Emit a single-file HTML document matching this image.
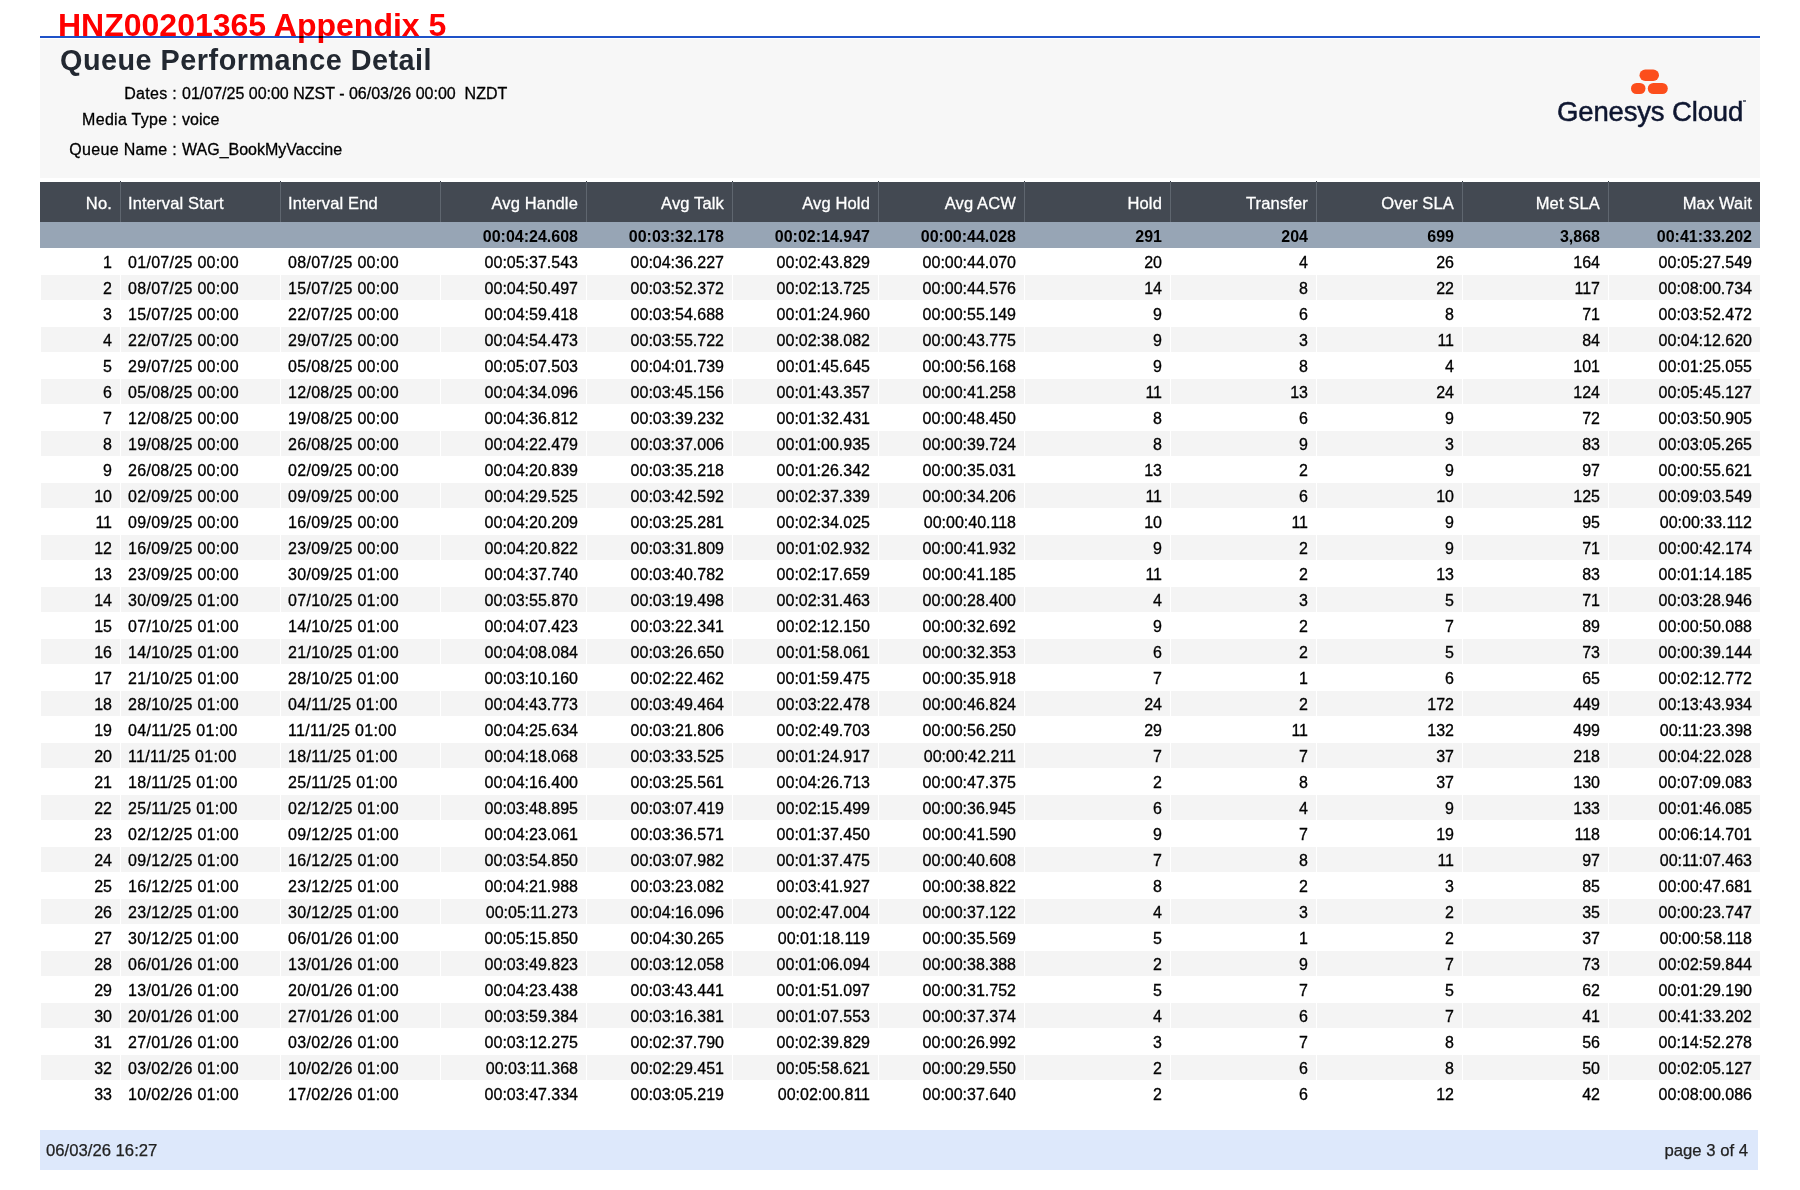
<!DOCTYPE html>
<html><head><meta charset="utf-8">
<style>
html,body{margin:0;padding:0;}
body{width:1800px;height:1190px;position:relative;overflow:hidden;background:#fff;font-family:"Liberation Sans",sans-serif;color:#000;}
.a{position:absolute;white-space:nowrap;}
#redtitle{left:58px;top:7px;font-size:32px;line-height:36px;font-weight:bold;color:#ff0000;mix-blend-mode:multiply;}
#blueline{position:absolute;left:40px;top:36px;width:1720px;height:2px;background:#1e52c8;}
#hdrbg{position:absolute;left:40px;top:39px;width:1720px;height:139px;background:#f7f7f7;}
#qpd{left:60px;top:43px;font-size:28.8px;line-height:34px;font-weight:bold;color:#222831;letter-spacing:0.5px;}
.meta{font-size:16px;line-height:20px;color:#000;-webkit-text-stroke:0.3px #000;}
.lbl{position:absolute;right:1623px;text-align:right;letter-spacing:0.3px;}
.val{position:absolute;left:182px;}
#logo{position:absolute;left:1550px;top:60px;width:200px;height:80px;}
#genesys{left:1557px;top:96px;font-size:27.5px;line-height:32px;color:#0e1630;letter-spacing:-0.15px;-webkit-text-stroke:0.5px #0e1630;}
#thead{position:absolute;left:40px;top:182px;width:1720px;height:40px;background:#434952;}
#tsum{position:absolute;left:40px;top:222px;width:1720px;height:26px;background:#97a5b5;}
.hsep{position:absolute;top:0;width:1px;height:40px;background:#5f666f;}
.hsep:before{content:"";position:absolute;left:0;top:-1px;width:1px;height:1px;background:#3a3f46;}
.c{position:absolute;top:0;white-space:nowrap;font-size:16px;}
.h{color:#fff;line-height:40px;font-size:16.5px;top:1px;letter-spacing:0.15px;-webkit-text-stroke:0.3px #fff;}
.s{font-weight:bold;line-height:26px;color:#000;top:2px;}
.row{position:absolute;left:40px;width:1720px;height:26px;}
.bg{position:absolute;top:1px;height:25px;background:#f4f4f4;}
.d{line-height:26px;color:#000;top:2px;-webkit-text-stroke:0.3px #000;}
.dt{letter-spacing:0.3px;}
#footer{position:absolute;left:40px;top:1130px;width:1718px;height:40px;background:#dde8fb;}
.ft{font-size:16.7px;line-height:40px;color:#222;position:absolute;top:1px;-webkit-text-stroke:0.25px #222;}
</style></head><body>
<div id="hdrbg"></div>
<div id="blueline"></div>
<div id="redtitle" class="a">HNZ00201365 Appendix 5</div>
<div id="qpd" class="a">Queue Performance Detail</div>
<div class="a meta" style="left:0;top:84px;width:1800px;height:20px"><span class="lbl">Dates :</span><span class="val">01/07/25 00:00 NZST - 06/03/26 00:00&nbsp; NZDT</span></div>
<div class="a meta" style="left:0;top:110px;width:1800px;height:20px"><span class="lbl">Media Type :</span><span class="val">voice</span></div>
<div class="a meta" style="left:0;top:140px;width:1800px;height:20px"><span class="lbl">Queue Name :</span><span class="val">WAG_BookMyVaccine</span></div>
<svg id="logo" width="200" height="80" viewBox="1550 60 200 80" style="position:absolute;left:1550px;top:60px">
<rect x="1639.5" y="69.5" width="19.5" height="11.5" rx="5.75" fill="#fc4e1c"/>
<rect x="1631" y="83" width="14.5" height="11" rx="5.5" fill="#fc4e1c"/>
<rect x="1647.8" y="83" width="20" height="11" rx="5.5" fill="#fc4e1c"/>
</svg>
<div id="genesys" class="a">Genesys Cloud</div>
<div style="position:absolute;left:1743px;top:100px;width:3px;height:2px;background:#0e1630;opacity:0.6"></div>
<div id="thead">
<div class="c h" style="left:0px;width:72px;text-align:right">No.</div>
<div class="c h" style="left:88px;width:152px">Interval Start</div>
<div class="c h" style="left:248px;width:152px">Interval End</div>
<div class="c h" style="left:400px;width:138px;text-align:right">Avg Handle</div>
<div class="c h" style="left:546px;width:138px;text-align:right">Avg Talk</div>
<div class="c h" style="left:692px;width:138px;text-align:right">Avg Hold</div>
<div class="c h" style="left:838px;width:138px;text-align:right">Avg ACW</div>
<div class="c h" style="left:984px;width:138px;text-align:right">Hold</div>
<div class="c h" style="left:1130px;width:138px;text-align:right">Transfer</div>
<div class="c h" style="left:1276px;width:138px;text-align:right">Over SLA</div>
<div class="c h" style="left:1422px;width:138px;text-align:right">Met SLA</div>
<div class="c h" style="left:1568px;width:144px;text-align:right">Max Wait</div>
<div class="hsep" style="left:80px"></div>
<div class="hsep" style="left:240px"></div>
<div class="hsep" style="left:400px"></div>
<div class="hsep" style="left:546px"></div>
<div class="hsep" style="left:692px"></div>
<div class="hsep" style="left:838px"></div>
<div class="hsep" style="left:984px"></div>
<div class="hsep" style="left:1130px"></div>
<div class="hsep" style="left:1276px"></div>
<div class="hsep" style="left:1422px"></div>
<div class="hsep" style="left:1568px"></div>
</div>
<div id="tsum">
<div class="c s" style="left:400px;width:138px;text-align:right">00:04:24.608</div>
<div class="c s" style="left:546px;width:138px;text-align:right">00:03:32.178</div>
<div class="c s" style="left:692px;width:138px;text-align:right">00:02:14.947</div>
<div class="c s" style="left:838px;width:138px;text-align:right">00:00:44.028</div>
<div class="c s" style="left:984px;width:138px;text-align:right">291</div>
<div class="c s" style="left:1130px;width:138px;text-align:right">204</div>
<div class="c s" style="left:1276px;width:138px;text-align:right">699</div>
<div class="c s" style="left:1422px;width:138px;text-align:right">3,868</div>
<div class="c s" style="left:1568px;width:144px;text-align:right">00:41:33.202</div>
</div>
<div class="row" style="top:248px">
<div class="c d" style="left:0px;width:72px;text-align:right">1</div>
<div class="c d dt" style="left:88px;width:152px">01/07/25 00:00</div>
<div class="c d dt" style="left:248px;width:152px">08/07/25 00:00</div>
<div class="c d" style="left:400px;width:138px;text-align:right">00:05:37.543</div>
<div class="c d" style="left:546px;width:138px;text-align:right">00:04:36.227</div>
<div class="c d" style="left:692px;width:138px;text-align:right">00:02:43.829</div>
<div class="c d" style="left:838px;width:138px;text-align:right">00:00:44.070</div>
<div class="c d" style="left:984px;width:138px;text-align:right">20</div>
<div class="c d" style="left:1130px;width:138px;text-align:right">4</div>
<div class="c d" style="left:1276px;width:138px;text-align:right">26</div>
<div class="c d" style="left:1422px;width:138px;text-align:right">164</div>
<div class="c d" style="left:1568px;width:144px;text-align:right">00:05:27.549</div>
</div>
<div class="row" style="top:274px">
<div class="bg" style="left:1px;width:79px"></div>
<div class="bg" style="left:81px;width:159px"></div>
<div class="bg" style="left:241px;width:159px"></div>
<div class="bg" style="left:401px;width:145px"></div>
<div class="bg" style="left:547px;width:145px"></div>
<div class="bg" style="left:693px;width:145px"></div>
<div class="bg" style="left:839px;width:145px"></div>
<div class="bg" style="left:985px;width:145px"></div>
<div class="bg" style="left:1131px;width:145px"></div>
<div class="bg" style="left:1277px;width:145px"></div>
<div class="bg" style="left:1423px;width:145px"></div>
<div class="bg" style="left:1569px;width:151px"></div>
<div class="c d" style="left:0px;width:72px;text-align:right">2</div>
<div class="c d dt" style="left:88px;width:152px">08/07/25 00:00</div>
<div class="c d dt" style="left:248px;width:152px">15/07/25 00:00</div>
<div class="c d" style="left:400px;width:138px;text-align:right">00:04:50.497</div>
<div class="c d" style="left:546px;width:138px;text-align:right">00:03:52.372</div>
<div class="c d" style="left:692px;width:138px;text-align:right">00:02:13.725</div>
<div class="c d" style="left:838px;width:138px;text-align:right">00:00:44.576</div>
<div class="c d" style="left:984px;width:138px;text-align:right">14</div>
<div class="c d" style="left:1130px;width:138px;text-align:right">8</div>
<div class="c d" style="left:1276px;width:138px;text-align:right">22</div>
<div class="c d" style="left:1422px;width:138px;text-align:right">117</div>
<div class="c d" style="left:1568px;width:144px;text-align:right">00:08:00.734</div>
</div>
<div class="row" style="top:300px">
<div class="c d" style="left:0px;width:72px;text-align:right">3</div>
<div class="c d dt" style="left:88px;width:152px">15/07/25 00:00</div>
<div class="c d dt" style="left:248px;width:152px">22/07/25 00:00</div>
<div class="c d" style="left:400px;width:138px;text-align:right">00:04:59.418</div>
<div class="c d" style="left:546px;width:138px;text-align:right">00:03:54.688</div>
<div class="c d" style="left:692px;width:138px;text-align:right">00:01:24.960</div>
<div class="c d" style="left:838px;width:138px;text-align:right">00:00:55.149</div>
<div class="c d" style="left:984px;width:138px;text-align:right">9</div>
<div class="c d" style="left:1130px;width:138px;text-align:right">6</div>
<div class="c d" style="left:1276px;width:138px;text-align:right">8</div>
<div class="c d" style="left:1422px;width:138px;text-align:right">71</div>
<div class="c d" style="left:1568px;width:144px;text-align:right">00:03:52.472</div>
</div>
<div class="row" style="top:326px">
<div class="bg" style="left:1px;width:79px"></div>
<div class="bg" style="left:81px;width:159px"></div>
<div class="bg" style="left:241px;width:159px"></div>
<div class="bg" style="left:401px;width:145px"></div>
<div class="bg" style="left:547px;width:145px"></div>
<div class="bg" style="left:693px;width:145px"></div>
<div class="bg" style="left:839px;width:145px"></div>
<div class="bg" style="left:985px;width:145px"></div>
<div class="bg" style="left:1131px;width:145px"></div>
<div class="bg" style="left:1277px;width:145px"></div>
<div class="bg" style="left:1423px;width:145px"></div>
<div class="bg" style="left:1569px;width:151px"></div>
<div class="c d" style="left:0px;width:72px;text-align:right">4</div>
<div class="c d dt" style="left:88px;width:152px">22/07/25 00:00</div>
<div class="c d dt" style="left:248px;width:152px">29/07/25 00:00</div>
<div class="c d" style="left:400px;width:138px;text-align:right">00:04:54.473</div>
<div class="c d" style="left:546px;width:138px;text-align:right">00:03:55.722</div>
<div class="c d" style="left:692px;width:138px;text-align:right">00:02:38.082</div>
<div class="c d" style="left:838px;width:138px;text-align:right">00:00:43.775</div>
<div class="c d" style="left:984px;width:138px;text-align:right">9</div>
<div class="c d" style="left:1130px;width:138px;text-align:right">3</div>
<div class="c d" style="left:1276px;width:138px;text-align:right">11</div>
<div class="c d" style="left:1422px;width:138px;text-align:right">84</div>
<div class="c d" style="left:1568px;width:144px;text-align:right">00:04:12.620</div>
</div>
<div class="row" style="top:352px">
<div class="c d" style="left:0px;width:72px;text-align:right">5</div>
<div class="c d dt" style="left:88px;width:152px">29/07/25 00:00</div>
<div class="c d dt" style="left:248px;width:152px">05/08/25 00:00</div>
<div class="c d" style="left:400px;width:138px;text-align:right">00:05:07.503</div>
<div class="c d" style="left:546px;width:138px;text-align:right">00:04:01.739</div>
<div class="c d" style="left:692px;width:138px;text-align:right">00:01:45.645</div>
<div class="c d" style="left:838px;width:138px;text-align:right">00:00:56.168</div>
<div class="c d" style="left:984px;width:138px;text-align:right">9</div>
<div class="c d" style="left:1130px;width:138px;text-align:right">8</div>
<div class="c d" style="left:1276px;width:138px;text-align:right">4</div>
<div class="c d" style="left:1422px;width:138px;text-align:right">101</div>
<div class="c d" style="left:1568px;width:144px;text-align:right">00:01:25.055</div>
</div>
<div class="row" style="top:378px">
<div class="bg" style="left:1px;width:79px"></div>
<div class="bg" style="left:81px;width:159px"></div>
<div class="bg" style="left:241px;width:159px"></div>
<div class="bg" style="left:401px;width:145px"></div>
<div class="bg" style="left:547px;width:145px"></div>
<div class="bg" style="left:693px;width:145px"></div>
<div class="bg" style="left:839px;width:145px"></div>
<div class="bg" style="left:985px;width:145px"></div>
<div class="bg" style="left:1131px;width:145px"></div>
<div class="bg" style="left:1277px;width:145px"></div>
<div class="bg" style="left:1423px;width:145px"></div>
<div class="bg" style="left:1569px;width:151px"></div>
<div class="c d" style="left:0px;width:72px;text-align:right">6</div>
<div class="c d dt" style="left:88px;width:152px">05/08/25 00:00</div>
<div class="c d dt" style="left:248px;width:152px">12/08/25 00:00</div>
<div class="c d" style="left:400px;width:138px;text-align:right">00:04:34.096</div>
<div class="c d" style="left:546px;width:138px;text-align:right">00:03:45.156</div>
<div class="c d" style="left:692px;width:138px;text-align:right">00:01:43.357</div>
<div class="c d" style="left:838px;width:138px;text-align:right">00:00:41.258</div>
<div class="c d" style="left:984px;width:138px;text-align:right">11</div>
<div class="c d" style="left:1130px;width:138px;text-align:right">13</div>
<div class="c d" style="left:1276px;width:138px;text-align:right">24</div>
<div class="c d" style="left:1422px;width:138px;text-align:right">124</div>
<div class="c d" style="left:1568px;width:144px;text-align:right">00:05:45.127</div>
</div>
<div class="row" style="top:404px">
<div class="c d" style="left:0px;width:72px;text-align:right">7</div>
<div class="c d dt" style="left:88px;width:152px">12/08/25 00:00</div>
<div class="c d dt" style="left:248px;width:152px">19/08/25 00:00</div>
<div class="c d" style="left:400px;width:138px;text-align:right">00:04:36.812</div>
<div class="c d" style="left:546px;width:138px;text-align:right">00:03:39.232</div>
<div class="c d" style="left:692px;width:138px;text-align:right">00:01:32.431</div>
<div class="c d" style="left:838px;width:138px;text-align:right">00:00:48.450</div>
<div class="c d" style="left:984px;width:138px;text-align:right">8</div>
<div class="c d" style="left:1130px;width:138px;text-align:right">6</div>
<div class="c d" style="left:1276px;width:138px;text-align:right">9</div>
<div class="c d" style="left:1422px;width:138px;text-align:right">72</div>
<div class="c d" style="left:1568px;width:144px;text-align:right">00:03:50.905</div>
</div>
<div class="row" style="top:430px">
<div class="bg" style="left:1px;width:79px"></div>
<div class="bg" style="left:81px;width:159px"></div>
<div class="bg" style="left:241px;width:159px"></div>
<div class="bg" style="left:401px;width:145px"></div>
<div class="bg" style="left:547px;width:145px"></div>
<div class="bg" style="left:693px;width:145px"></div>
<div class="bg" style="left:839px;width:145px"></div>
<div class="bg" style="left:985px;width:145px"></div>
<div class="bg" style="left:1131px;width:145px"></div>
<div class="bg" style="left:1277px;width:145px"></div>
<div class="bg" style="left:1423px;width:145px"></div>
<div class="bg" style="left:1569px;width:151px"></div>
<div class="c d" style="left:0px;width:72px;text-align:right">8</div>
<div class="c d dt" style="left:88px;width:152px">19/08/25 00:00</div>
<div class="c d dt" style="left:248px;width:152px">26/08/25 00:00</div>
<div class="c d" style="left:400px;width:138px;text-align:right">00:04:22.479</div>
<div class="c d" style="left:546px;width:138px;text-align:right">00:03:37.006</div>
<div class="c d" style="left:692px;width:138px;text-align:right">00:01:00.935</div>
<div class="c d" style="left:838px;width:138px;text-align:right">00:00:39.724</div>
<div class="c d" style="left:984px;width:138px;text-align:right">8</div>
<div class="c d" style="left:1130px;width:138px;text-align:right">9</div>
<div class="c d" style="left:1276px;width:138px;text-align:right">3</div>
<div class="c d" style="left:1422px;width:138px;text-align:right">83</div>
<div class="c d" style="left:1568px;width:144px;text-align:right">00:03:05.265</div>
</div>
<div class="row" style="top:456px">
<div class="c d" style="left:0px;width:72px;text-align:right">9</div>
<div class="c d dt" style="left:88px;width:152px">26/08/25 00:00</div>
<div class="c d dt" style="left:248px;width:152px">02/09/25 00:00</div>
<div class="c d" style="left:400px;width:138px;text-align:right">00:04:20.839</div>
<div class="c d" style="left:546px;width:138px;text-align:right">00:03:35.218</div>
<div class="c d" style="left:692px;width:138px;text-align:right">00:01:26.342</div>
<div class="c d" style="left:838px;width:138px;text-align:right">00:00:35.031</div>
<div class="c d" style="left:984px;width:138px;text-align:right">13</div>
<div class="c d" style="left:1130px;width:138px;text-align:right">2</div>
<div class="c d" style="left:1276px;width:138px;text-align:right">9</div>
<div class="c d" style="left:1422px;width:138px;text-align:right">97</div>
<div class="c d" style="left:1568px;width:144px;text-align:right">00:00:55.621</div>
</div>
<div class="row" style="top:482px">
<div class="bg" style="left:1px;width:79px"></div>
<div class="bg" style="left:81px;width:159px"></div>
<div class="bg" style="left:241px;width:159px"></div>
<div class="bg" style="left:401px;width:145px"></div>
<div class="bg" style="left:547px;width:145px"></div>
<div class="bg" style="left:693px;width:145px"></div>
<div class="bg" style="left:839px;width:145px"></div>
<div class="bg" style="left:985px;width:145px"></div>
<div class="bg" style="left:1131px;width:145px"></div>
<div class="bg" style="left:1277px;width:145px"></div>
<div class="bg" style="left:1423px;width:145px"></div>
<div class="bg" style="left:1569px;width:151px"></div>
<div class="c d" style="left:0px;width:72px;text-align:right">10</div>
<div class="c d dt" style="left:88px;width:152px">02/09/25 00:00</div>
<div class="c d dt" style="left:248px;width:152px">09/09/25 00:00</div>
<div class="c d" style="left:400px;width:138px;text-align:right">00:04:29.525</div>
<div class="c d" style="left:546px;width:138px;text-align:right">00:03:42.592</div>
<div class="c d" style="left:692px;width:138px;text-align:right">00:02:37.339</div>
<div class="c d" style="left:838px;width:138px;text-align:right">00:00:34.206</div>
<div class="c d" style="left:984px;width:138px;text-align:right">11</div>
<div class="c d" style="left:1130px;width:138px;text-align:right">6</div>
<div class="c d" style="left:1276px;width:138px;text-align:right">10</div>
<div class="c d" style="left:1422px;width:138px;text-align:right">125</div>
<div class="c d" style="left:1568px;width:144px;text-align:right">00:09:03.549</div>
</div>
<div class="row" style="top:508px">
<div class="c d" style="left:0px;width:72px;text-align:right">11</div>
<div class="c d dt" style="left:88px;width:152px">09/09/25 00:00</div>
<div class="c d dt" style="left:248px;width:152px">16/09/25 00:00</div>
<div class="c d" style="left:400px;width:138px;text-align:right">00:04:20.209</div>
<div class="c d" style="left:546px;width:138px;text-align:right">00:03:25.281</div>
<div class="c d" style="left:692px;width:138px;text-align:right">00:02:34.025</div>
<div class="c d" style="left:838px;width:138px;text-align:right">00:00:40.118</div>
<div class="c d" style="left:984px;width:138px;text-align:right">10</div>
<div class="c d" style="left:1130px;width:138px;text-align:right">11</div>
<div class="c d" style="left:1276px;width:138px;text-align:right">9</div>
<div class="c d" style="left:1422px;width:138px;text-align:right">95</div>
<div class="c d" style="left:1568px;width:144px;text-align:right">00:00:33.112</div>
</div>
<div class="row" style="top:534px">
<div class="bg" style="left:1px;width:79px"></div>
<div class="bg" style="left:81px;width:159px"></div>
<div class="bg" style="left:241px;width:159px"></div>
<div class="bg" style="left:401px;width:145px"></div>
<div class="bg" style="left:547px;width:145px"></div>
<div class="bg" style="left:693px;width:145px"></div>
<div class="bg" style="left:839px;width:145px"></div>
<div class="bg" style="left:985px;width:145px"></div>
<div class="bg" style="left:1131px;width:145px"></div>
<div class="bg" style="left:1277px;width:145px"></div>
<div class="bg" style="left:1423px;width:145px"></div>
<div class="bg" style="left:1569px;width:151px"></div>
<div class="c d" style="left:0px;width:72px;text-align:right">12</div>
<div class="c d dt" style="left:88px;width:152px">16/09/25 00:00</div>
<div class="c d dt" style="left:248px;width:152px">23/09/25 00:00</div>
<div class="c d" style="left:400px;width:138px;text-align:right">00:04:20.822</div>
<div class="c d" style="left:546px;width:138px;text-align:right">00:03:31.809</div>
<div class="c d" style="left:692px;width:138px;text-align:right">00:01:02.932</div>
<div class="c d" style="left:838px;width:138px;text-align:right">00:00:41.932</div>
<div class="c d" style="left:984px;width:138px;text-align:right">9</div>
<div class="c d" style="left:1130px;width:138px;text-align:right">2</div>
<div class="c d" style="left:1276px;width:138px;text-align:right">9</div>
<div class="c d" style="left:1422px;width:138px;text-align:right">71</div>
<div class="c d" style="left:1568px;width:144px;text-align:right">00:00:42.174</div>
</div>
<div class="row" style="top:560px">
<div class="c d" style="left:0px;width:72px;text-align:right">13</div>
<div class="c d dt" style="left:88px;width:152px">23/09/25 00:00</div>
<div class="c d dt" style="left:248px;width:152px">30/09/25 01:00</div>
<div class="c d" style="left:400px;width:138px;text-align:right">00:04:37.740</div>
<div class="c d" style="left:546px;width:138px;text-align:right">00:03:40.782</div>
<div class="c d" style="left:692px;width:138px;text-align:right">00:02:17.659</div>
<div class="c d" style="left:838px;width:138px;text-align:right">00:00:41.185</div>
<div class="c d" style="left:984px;width:138px;text-align:right">11</div>
<div class="c d" style="left:1130px;width:138px;text-align:right">2</div>
<div class="c d" style="left:1276px;width:138px;text-align:right">13</div>
<div class="c d" style="left:1422px;width:138px;text-align:right">83</div>
<div class="c d" style="left:1568px;width:144px;text-align:right">00:01:14.185</div>
</div>
<div class="row" style="top:586px">
<div class="bg" style="left:1px;width:79px"></div>
<div class="bg" style="left:81px;width:159px"></div>
<div class="bg" style="left:241px;width:159px"></div>
<div class="bg" style="left:401px;width:145px"></div>
<div class="bg" style="left:547px;width:145px"></div>
<div class="bg" style="left:693px;width:145px"></div>
<div class="bg" style="left:839px;width:145px"></div>
<div class="bg" style="left:985px;width:145px"></div>
<div class="bg" style="left:1131px;width:145px"></div>
<div class="bg" style="left:1277px;width:145px"></div>
<div class="bg" style="left:1423px;width:145px"></div>
<div class="bg" style="left:1569px;width:151px"></div>
<div class="c d" style="left:0px;width:72px;text-align:right">14</div>
<div class="c d dt" style="left:88px;width:152px">30/09/25 01:00</div>
<div class="c d dt" style="left:248px;width:152px">07/10/25 01:00</div>
<div class="c d" style="left:400px;width:138px;text-align:right">00:03:55.870</div>
<div class="c d" style="left:546px;width:138px;text-align:right">00:03:19.498</div>
<div class="c d" style="left:692px;width:138px;text-align:right">00:02:31.463</div>
<div class="c d" style="left:838px;width:138px;text-align:right">00:00:28.400</div>
<div class="c d" style="left:984px;width:138px;text-align:right">4</div>
<div class="c d" style="left:1130px;width:138px;text-align:right">3</div>
<div class="c d" style="left:1276px;width:138px;text-align:right">5</div>
<div class="c d" style="left:1422px;width:138px;text-align:right">71</div>
<div class="c d" style="left:1568px;width:144px;text-align:right">00:03:28.946</div>
</div>
<div class="row" style="top:612px">
<div class="c d" style="left:0px;width:72px;text-align:right">15</div>
<div class="c d dt" style="left:88px;width:152px">07/10/25 01:00</div>
<div class="c d dt" style="left:248px;width:152px">14/10/25 01:00</div>
<div class="c d" style="left:400px;width:138px;text-align:right">00:04:07.423</div>
<div class="c d" style="left:546px;width:138px;text-align:right">00:03:22.341</div>
<div class="c d" style="left:692px;width:138px;text-align:right">00:02:12.150</div>
<div class="c d" style="left:838px;width:138px;text-align:right">00:00:32.692</div>
<div class="c d" style="left:984px;width:138px;text-align:right">9</div>
<div class="c d" style="left:1130px;width:138px;text-align:right">2</div>
<div class="c d" style="left:1276px;width:138px;text-align:right">7</div>
<div class="c d" style="left:1422px;width:138px;text-align:right">89</div>
<div class="c d" style="left:1568px;width:144px;text-align:right">00:00:50.088</div>
</div>
<div class="row" style="top:638px">
<div class="bg" style="left:1px;width:79px"></div>
<div class="bg" style="left:81px;width:159px"></div>
<div class="bg" style="left:241px;width:159px"></div>
<div class="bg" style="left:401px;width:145px"></div>
<div class="bg" style="left:547px;width:145px"></div>
<div class="bg" style="left:693px;width:145px"></div>
<div class="bg" style="left:839px;width:145px"></div>
<div class="bg" style="left:985px;width:145px"></div>
<div class="bg" style="left:1131px;width:145px"></div>
<div class="bg" style="left:1277px;width:145px"></div>
<div class="bg" style="left:1423px;width:145px"></div>
<div class="bg" style="left:1569px;width:151px"></div>
<div class="c d" style="left:0px;width:72px;text-align:right">16</div>
<div class="c d dt" style="left:88px;width:152px">14/10/25 01:00</div>
<div class="c d dt" style="left:248px;width:152px">21/10/25 01:00</div>
<div class="c d" style="left:400px;width:138px;text-align:right">00:04:08.084</div>
<div class="c d" style="left:546px;width:138px;text-align:right">00:03:26.650</div>
<div class="c d" style="left:692px;width:138px;text-align:right">00:01:58.061</div>
<div class="c d" style="left:838px;width:138px;text-align:right">00:00:32.353</div>
<div class="c d" style="left:984px;width:138px;text-align:right">6</div>
<div class="c d" style="left:1130px;width:138px;text-align:right">2</div>
<div class="c d" style="left:1276px;width:138px;text-align:right">5</div>
<div class="c d" style="left:1422px;width:138px;text-align:right">73</div>
<div class="c d" style="left:1568px;width:144px;text-align:right">00:00:39.144</div>
</div>
<div class="row" style="top:664px">
<div class="c d" style="left:0px;width:72px;text-align:right">17</div>
<div class="c d dt" style="left:88px;width:152px">21/10/25 01:00</div>
<div class="c d dt" style="left:248px;width:152px">28/10/25 01:00</div>
<div class="c d" style="left:400px;width:138px;text-align:right">00:03:10.160</div>
<div class="c d" style="left:546px;width:138px;text-align:right">00:02:22.462</div>
<div class="c d" style="left:692px;width:138px;text-align:right">00:01:59.475</div>
<div class="c d" style="left:838px;width:138px;text-align:right">00:00:35.918</div>
<div class="c d" style="left:984px;width:138px;text-align:right">7</div>
<div class="c d" style="left:1130px;width:138px;text-align:right">1</div>
<div class="c d" style="left:1276px;width:138px;text-align:right">6</div>
<div class="c d" style="left:1422px;width:138px;text-align:right">65</div>
<div class="c d" style="left:1568px;width:144px;text-align:right">00:02:12.772</div>
</div>
<div class="row" style="top:690px">
<div class="bg" style="left:1px;width:79px"></div>
<div class="bg" style="left:81px;width:159px"></div>
<div class="bg" style="left:241px;width:159px"></div>
<div class="bg" style="left:401px;width:145px"></div>
<div class="bg" style="left:547px;width:145px"></div>
<div class="bg" style="left:693px;width:145px"></div>
<div class="bg" style="left:839px;width:145px"></div>
<div class="bg" style="left:985px;width:145px"></div>
<div class="bg" style="left:1131px;width:145px"></div>
<div class="bg" style="left:1277px;width:145px"></div>
<div class="bg" style="left:1423px;width:145px"></div>
<div class="bg" style="left:1569px;width:151px"></div>
<div class="c d" style="left:0px;width:72px;text-align:right">18</div>
<div class="c d dt" style="left:88px;width:152px">28/10/25 01:00</div>
<div class="c d dt" style="left:248px;width:152px">04/11/25 01:00</div>
<div class="c d" style="left:400px;width:138px;text-align:right">00:04:43.773</div>
<div class="c d" style="left:546px;width:138px;text-align:right">00:03:49.464</div>
<div class="c d" style="left:692px;width:138px;text-align:right">00:03:22.478</div>
<div class="c d" style="left:838px;width:138px;text-align:right">00:00:46.824</div>
<div class="c d" style="left:984px;width:138px;text-align:right">24</div>
<div class="c d" style="left:1130px;width:138px;text-align:right">2</div>
<div class="c d" style="left:1276px;width:138px;text-align:right">172</div>
<div class="c d" style="left:1422px;width:138px;text-align:right">449</div>
<div class="c d" style="left:1568px;width:144px;text-align:right">00:13:43.934</div>
</div>
<div class="row" style="top:716px">
<div class="c d" style="left:0px;width:72px;text-align:right">19</div>
<div class="c d dt" style="left:88px;width:152px">04/11/25 01:00</div>
<div class="c d dt" style="left:248px;width:152px">11/11/25 01:00</div>
<div class="c d" style="left:400px;width:138px;text-align:right">00:04:25.634</div>
<div class="c d" style="left:546px;width:138px;text-align:right">00:03:21.806</div>
<div class="c d" style="left:692px;width:138px;text-align:right">00:02:49.703</div>
<div class="c d" style="left:838px;width:138px;text-align:right">00:00:56.250</div>
<div class="c d" style="left:984px;width:138px;text-align:right">29</div>
<div class="c d" style="left:1130px;width:138px;text-align:right">11</div>
<div class="c d" style="left:1276px;width:138px;text-align:right">132</div>
<div class="c d" style="left:1422px;width:138px;text-align:right">499</div>
<div class="c d" style="left:1568px;width:144px;text-align:right">00:11:23.398</div>
</div>
<div class="row" style="top:742px">
<div class="bg" style="left:1px;width:79px"></div>
<div class="bg" style="left:81px;width:159px"></div>
<div class="bg" style="left:241px;width:159px"></div>
<div class="bg" style="left:401px;width:145px"></div>
<div class="bg" style="left:547px;width:145px"></div>
<div class="bg" style="left:693px;width:145px"></div>
<div class="bg" style="left:839px;width:145px"></div>
<div class="bg" style="left:985px;width:145px"></div>
<div class="bg" style="left:1131px;width:145px"></div>
<div class="bg" style="left:1277px;width:145px"></div>
<div class="bg" style="left:1423px;width:145px"></div>
<div class="bg" style="left:1569px;width:151px"></div>
<div class="c d" style="left:0px;width:72px;text-align:right">20</div>
<div class="c d dt" style="left:88px;width:152px">11/11/25 01:00</div>
<div class="c d dt" style="left:248px;width:152px">18/11/25 01:00</div>
<div class="c d" style="left:400px;width:138px;text-align:right">00:04:18.068</div>
<div class="c d" style="left:546px;width:138px;text-align:right">00:03:33.525</div>
<div class="c d" style="left:692px;width:138px;text-align:right">00:01:24.917</div>
<div class="c d" style="left:838px;width:138px;text-align:right">00:00:42.211</div>
<div class="c d" style="left:984px;width:138px;text-align:right">7</div>
<div class="c d" style="left:1130px;width:138px;text-align:right">7</div>
<div class="c d" style="left:1276px;width:138px;text-align:right">37</div>
<div class="c d" style="left:1422px;width:138px;text-align:right">218</div>
<div class="c d" style="left:1568px;width:144px;text-align:right">00:04:22.028</div>
</div>
<div class="row" style="top:768px">
<div class="c d" style="left:0px;width:72px;text-align:right">21</div>
<div class="c d dt" style="left:88px;width:152px">18/11/25 01:00</div>
<div class="c d dt" style="left:248px;width:152px">25/11/25 01:00</div>
<div class="c d" style="left:400px;width:138px;text-align:right">00:04:16.400</div>
<div class="c d" style="left:546px;width:138px;text-align:right">00:03:25.561</div>
<div class="c d" style="left:692px;width:138px;text-align:right">00:04:26.713</div>
<div class="c d" style="left:838px;width:138px;text-align:right">00:00:47.375</div>
<div class="c d" style="left:984px;width:138px;text-align:right">2</div>
<div class="c d" style="left:1130px;width:138px;text-align:right">8</div>
<div class="c d" style="left:1276px;width:138px;text-align:right">37</div>
<div class="c d" style="left:1422px;width:138px;text-align:right">130</div>
<div class="c d" style="left:1568px;width:144px;text-align:right">00:07:09.083</div>
</div>
<div class="row" style="top:794px">
<div class="bg" style="left:1px;width:79px"></div>
<div class="bg" style="left:81px;width:159px"></div>
<div class="bg" style="left:241px;width:159px"></div>
<div class="bg" style="left:401px;width:145px"></div>
<div class="bg" style="left:547px;width:145px"></div>
<div class="bg" style="left:693px;width:145px"></div>
<div class="bg" style="left:839px;width:145px"></div>
<div class="bg" style="left:985px;width:145px"></div>
<div class="bg" style="left:1131px;width:145px"></div>
<div class="bg" style="left:1277px;width:145px"></div>
<div class="bg" style="left:1423px;width:145px"></div>
<div class="bg" style="left:1569px;width:151px"></div>
<div class="c d" style="left:0px;width:72px;text-align:right">22</div>
<div class="c d dt" style="left:88px;width:152px">25/11/25 01:00</div>
<div class="c d dt" style="left:248px;width:152px">02/12/25 01:00</div>
<div class="c d" style="left:400px;width:138px;text-align:right">00:03:48.895</div>
<div class="c d" style="left:546px;width:138px;text-align:right">00:03:07.419</div>
<div class="c d" style="left:692px;width:138px;text-align:right">00:02:15.499</div>
<div class="c d" style="left:838px;width:138px;text-align:right">00:00:36.945</div>
<div class="c d" style="left:984px;width:138px;text-align:right">6</div>
<div class="c d" style="left:1130px;width:138px;text-align:right">4</div>
<div class="c d" style="left:1276px;width:138px;text-align:right">9</div>
<div class="c d" style="left:1422px;width:138px;text-align:right">133</div>
<div class="c d" style="left:1568px;width:144px;text-align:right">00:01:46.085</div>
</div>
<div class="row" style="top:820px">
<div class="c d" style="left:0px;width:72px;text-align:right">23</div>
<div class="c d dt" style="left:88px;width:152px">02/12/25 01:00</div>
<div class="c d dt" style="left:248px;width:152px">09/12/25 01:00</div>
<div class="c d" style="left:400px;width:138px;text-align:right">00:04:23.061</div>
<div class="c d" style="left:546px;width:138px;text-align:right">00:03:36.571</div>
<div class="c d" style="left:692px;width:138px;text-align:right">00:01:37.450</div>
<div class="c d" style="left:838px;width:138px;text-align:right">00:00:41.590</div>
<div class="c d" style="left:984px;width:138px;text-align:right">9</div>
<div class="c d" style="left:1130px;width:138px;text-align:right">7</div>
<div class="c d" style="left:1276px;width:138px;text-align:right">19</div>
<div class="c d" style="left:1422px;width:138px;text-align:right">118</div>
<div class="c d" style="left:1568px;width:144px;text-align:right">00:06:14.701</div>
</div>
<div class="row" style="top:846px">
<div class="bg" style="left:1px;width:79px"></div>
<div class="bg" style="left:81px;width:159px"></div>
<div class="bg" style="left:241px;width:159px"></div>
<div class="bg" style="left:401px;width:145px"></div>
<div class="bg" style="left:547px;width:145px"></div>
<div class="bg" style="left:693px;width:145px"></div>
<div class="bg" style="left:839px;width:145px"></div>
<div class="bg" style="left:985px;width:145px"></div>
<div class="bg" style="left:1131px;width:145px"></div>
<div class="bg" style="left:1277px;width:145px"></div>
<div class="bg" style="left:1423px;width:145px"></div>
<div class="bg" style="left:1569px;width:151px"></div>
<div class="c d" style="left:0px;width:72px;text-align:right">24</div>
<div class="c d dt" style="left:88px;width:152px">09/12/25 01:00</div>
<div class="c d dt" style="left:248px;width:152px">16/12/25 01:00</div>
<div class="c d" style="left:400px;width:138px;text-align:right">00:03:54.850</div>
<div class="c d" style="left:546px;width:138px;text-align:right">00:03:07.982</div>
<div class="c d" style="left:692px;width:138px;text-align:right">00:01:37.475</div>
<div class="c d" style="left:838px;width:138px;text-align:right">00:00:40.608</div>
<div class="c d" style="left:984px;width:138px;text-align:right">7</div>
<div class="c d" style="left:1130px;width:138px;text-align:right">8</div>
<div class="c d" style="left:1276px;width:138px;text-align:right">11</div>
<div class="c d" style="left:1422px;width:138px;text-align:right">97</div>
<div class="c d" style="left:1568px;width:144px;text-align:right">00:11:07.463</div>
</div>
<div class="row" style="top:872px">
<div class="c d" style="left:0px;width:72px;text-align:right">25</div>
<div class="c d dt" style="left:88px;width:152px">16/12/25 01:00</div>
<div class="c d dt" style="left:248px;width:152px">23/12/25 01:00</div>
<div class="c d" style="left:400px;width:138px;text-align:right">00:04:21.988</div>
<div class="c d" style="left:546px;width:138px;text-align:right">00:03:23.082</div>
<div class="c d" style="left:692px;width:138px;text-align:right">00:03:41.927</div>
<div class="c d" style="left:838px;width:138px;text-align:right">00:00:38.822</div>
<div class="c d" style="left:984px;width:138px;text-align:right">8</div>
<div class="c d" style="left:1130px;width:138px;text-align:right">2</div>
<div class="c d" style="left:1276px;width:138px;text-align:right">3</div>
<div class="c d" style="left:1422px;width:138px;text-align:right">85</div>
<div class="c d" style="left:1568px;width:144px;text-align:right">00:00:47.681</div>
</div>
<div class="row" style="top:898px">
<div class="bg" style="left:1px;width:79px"></div>
<div class="bg" style="left:81px;width:159px"></div>
<div class="bg" style="left:241px;width:159px"></div>
<div class="bg" style="left:401px;width:145px"></div>
<div class="bg" style="left:547px;width:145px"></div>
<div class="bg" style="left:693px;width:145px"></div>
<div class="bg" style="left:839px;width:145px"></div>
<div class="bg" style="left:985px;width:145px"></div>
<div class="bg" style="left:1131px;width:145px"></div>
<div class="bg" style="left:1277px;width:145px"></div>
<div class="bg" style="left:1423px;width:145px"></div>
<div class="bg" style="left:1569px;width:151px"></div>
<div class="c d" style="left:0px;width:72px;text-align:right">26</div>
<div class="c d dt" style="left:88px;width:152px">23/12/25 01:00</div>
<div class="c d dt" style="left:248px;width:152px">30/12/25 01:00</div>
<div class="c d" style="left:400px;width:138px;text-align:right">00:05:11.273</div>
<div class="c d" style="left:546px;width:138px;text-align:right">00:04:16.096</div>
<div class="c d" style="left:692px;width:138px;text-align:right">00:02:47.004</div>
<div class="c d" style="left:838px;width:138px;text-align:right">00:00:37.122</div>
<div class="c d" style="left:984px;width:138px;text-align:right">4</div>
<div class="c d" style="left:1130px;width:138px;text-align:right">3</div>
<div class="c d" style="left:1276px;width:138px;text-align:right">2</div>
<div class="c d" style="left:1422px;width:138px;text-align:right">35</div>
<div class="c d" style="left:1568px;width:144px;text-align:right">00:00:23.747</div>
</div>
<div class="row" style="top:924px">
<div class="c d" style="left:0px;width:72px;text-align:right">27</div>
<div class="c d dt" style="left:88px;width:152px">30/12/25 01:00</div>
<div class="c d dt" style="left:248px;width:152px">06/01/26 01:00</div>
<div class="c d" style="left:400px;width:138px;text-align:right">00:05:15.850</div>
<div class="c d" style="left:546px;width:138px;text-align:right">00:04:30.265</div>
<div class="c d" style="left:692px;width:138px;text-align:right">00:01:18.119</div>
<div class="c d" style="left:838px;width:138px;text-align:right">00:00:35.569</div>
<div class="c d" style="left:984px;width:138px;text-align:right">5</div>
<div class="c d" style="left:1130px;width:138px;text-align:right">1</div>
<div class="c d" style="left:1276px;width:138px;text-align:right">2</div>
<div class="c d" style="left:1422px;width:138px;text-align:right">37</div>
<div class="c d" style="left:1568px;width:144px;text-align:right">00:00:58.118</div>
</div>
<div class="row" style="top:950px">
<div class="bg" style="left:1px;width:79px"></div>
<div class="bg" style="left:81px;width:159px"></div>
<div class="bg" style="left:241px;width:159px"></div>
<div class="bg" style="left:401px;width:145px"></div>
<div class="bg" style="left:547px;width:145px"></div>
<div class="bg" style="left:693px;width:145px"></div>
<div class="bg" style="left:839px;width:145px"></div>
<div class="bg" style="left:985px;width:145px"></div>
<div class="bg" style="left:1131px;width:145px"></div>
<div class="bg" style="left:1277px;width:145px"></div>
<div class="bg" style="left:1423px;width:145px"></div>
<div class="bg" style="left:1569px;width:151px"></div>
<div class="c d" style="left:0px;width:72px;text-align:right">28</div>
<div class="c d dt" style="left:88px;width:152px">06/01/26 01:00</div>
<div class="c d dt" style="left:248px;width:152px">13/01/26 01:00</div>
<div class="c d" style="left:400px;width:138px;text-align:right">00:03:49.823</div>
<div class="c d" style="left:546px;width:138px;text-align:right">00:03:12.058</div>
<div class="c d" style="left:692px;width:138px;text-align:right">00:01:06.094</div>
<div class="c d" style="left:838px;width:138px;text-align:right">00:00:38.388</div>
<div class="c d" style="left:984px;width:138px;text-align:right">2</div>
<div class="c d" style="left:1130px;width:138px;text-align:right">9</div>
<div class="c d" style="left:1276px;width:138px;text-align:right">7</div>
<div class="c d" style="left:1422px;width:138px;text-align:right">73</div>
<div class="c d" style="left:1568px;width:144px;text-align:right">00:02:59.844</div>
</div>
<div class="row" style="top:976px">
<div class="c d" style="left:0px;width:72px;text-align:right">29</div>
<div class="c d dt" style="left:88px;width:152px">13/01/26 01:00</div>
<div class="c d dt" style="left:248px;width:152px">20/01/26 01:00</div>
<div class="c d" style="left:400px;width:138px;text-align:right">00:04:23.438</div>
<div class="c d" style="left:546px;width:138px;text-align:right">00:03:43.441</div>
<div class="c d" style="left:692px;width:138px;text-align:right">00:01:51.097</div>
<div class="c d" style="left:838px;width:138px;text-align:right">00:00:31.752</div>
<div class="c d" style="left:984px;width:138px;text-align:right">5</div>
<div class="c d" style="left:1130px;width:138px;text-align:right">7</div>
<div class="c d" style="left:1276px;width:138px;text-align:right">5</div>
<div class="c d" style="left:1422px;width:138px;text-align:right">62</div>
<div class="c d" style="left:1568px;width:144px;text-align:right">00:01:29.190</div>
</div>
<div class="row" style="top:1002px">
<div class="bg" style="left:1px;width:79px"></div>
<div class="bg" style="left:81px;width:159px"></div>
<div class="bg" style="left:241px;width:159px"></div>
<div class="bg" style="left:401px;width:145px"></div>
<div class="bg" style="left:547px;width:145px"></div>
<div class="bg" style="left:693px;width:145px"></div>
<div class="bg" style="left:839px;width:145px"></div>
<div class="bg" style="left:985px;width:145px"></div>
<div class="bg" style="left:1131px;width:145px"></div>
<div class="bg" style="left:1277px;width:145px"></div>
<div class="bg" style="left:1423px;width:145px"></div>
<div class="bg" style="left:1569px;width:151px"></div>
<div class="c d" style="left:0px;width:72px;text-align:right">30</div>
<div class="c d dt" style="left:88px;width:152px">20/01/26 01:00</div>
<div class="c d dt" style="left:248px;width:152px">27/01/26 01:00</div>
<div class="c d" style="left:400px;width:138px;text-align:right">00:03:59.384</div>
<div class="c d" style="left:546px;width:138px;text-align:right">00:03:16.381</div>
<div class="c d" style="left:692px;width:138px;text-align:right">00:01:07.553</div>
<div class="c d" style="left:838px;width:138px;text-align:right">00:00:37.374</div>
<div class="c d" style="left:984px;width:138px;text-align:right">4</div>
<div class="c d" style="left:1130px;width:138px;text-align:right">6</div>
<div class="c d" style="left:1276px;width:138px;text-align:right">7</div>
<div class="c d" style="left:1422px;width:138px;text-align:right">41</div>
<div class="c d" style="left:1568px;width:144px;text-align:right">00:41:33.202</div>
</div>
<div class="row" style="top:1028px">
<div class="c d" style="left:0px;width:72px;text-align:right">31</div>
<div class="c d dt" style="left:88px;width:152px">27/01/26 01:00</div>
<div class="c d dt" style="left:248px;width:152px">03/02/26 01:00</div>
<div class="c d" style="left:400px;width:138px;text-align:right">00:03:12.275</div>
<div class="c d" style="left:546px;width:138px;text-align:right">00:02:37.790</div>
<div class="c d" style="left:692px;width:138px;text-align:right">00:02:39.829</div>
<div class="c d" style="left:838px;width:138px;text-align:right">00:00:26.992</div>
<div class="c d" style="left:984px;width:138px;text-align:right">3</div>
<div class="c d" style="left:1130px;width:138px;text-align:right">7</div>
<div class="c d" style="left:1276px;width:138px;text-align:right">8</div>
<div class="c d" style="left:1422px;width:138px;text-align:right">56</div>
<div class="c d" style="left:1568px;width:144px;text-align:right">00:14:52.278</div>
</div>
<div class="row" style="top:1054px">
<div class="bg" style="left:1px;width:79px"></div>
<div class="bg" style="left:81px;width:159px"></div>
<div class="bg" style="left:241px;width:159px"></div>
<div class="bg" style="left:401px;width:145px"></div>
<div class="bg" style="left:547px;width:145px"></div>
<div class="bg" style="left:693px;width:145px"></div>
<div class="bg" style="left:839px;width:145px"></div>
<div class="bg" style="left:985px;width:145px"></div>
<div class="bg" style="left:1131px;width:145px"></div>
<div class="bg" style="left:1277px;width:145px"></div>
<div class="bg" style="left:1423px;width:145px"></div>
<div class="bg" style="left:1569px;width:151px"></div>
<div class="c d" style="left:0px;width:72px;text-align:right">32</div>
<div class="c d dt" style="left:88px;width:152px">03/02/26 01:00</div>
<div class="c d dt" style="left:248px;width:152px">10/02/26 01:00</div>
<div class="c d" style="left:400px;width:138px;text-align:right">00:03:11.368</div>
<div class="c d" style="left:546px;width:138px;text-align:right">00:02:29.451</div>
<div class="c d" style="left:692px;width:138px;text-align:right">00:05:58.621</div>
<div class="c d" style="left:838px;width:138px;text-align:right">00:00:29.550</div>
<div class="c d" style="left:984px;width:138px;text-align:right">2</div>
<div class="c d" style="left:1130px;width:138px;text-align:right">6</div>
<div class="c d" style="left:1276px;width:138px;text-align:right">8</div>
<div class="c d" style="left:1422px;width:138px;text-align:right">50</div>
<div class="c d" style="left:1568px;width:144px;text-align:right">00:02:05.127</div>
</div>
<div class="row" style="top:1080px">
<div class="c d" style="left:0px;width:72px;text-align:right">33</div>
<div class="c d dt" style="left:88px;width:152px">10/02/26 01:00</div>
<div class="c d dt" style="left:248px;width:152px">17/02/26 01:00</div>
<div class="c d" style="left:400px;width:138px;text-align:right">00:03:47.334</div>
<div class="c d" style="left:546px;width:138px;text-align:right">00:03:05.219</div>
<div class="c d" style="left:692px;width:138px;text-align:right">00:02:00.811</div>
<div class="c d" style="left:838px;width:138px;text-align:right">00:00:37.640</div>
<div class="c d" style="left:984px;width:138px;text-align:right">2</div>
<div class="c d" style="left:1130px;width:138px;text-align:right">6</div>
<div class="c d" style="left:1276px;width:138px;text-align:right">12</div>
<div class="c d" style="left:1422px;width:138px;text-align:right">42</div>
<div class="c d" style="left:1568px;width:144px;text-align:right">00:08:00.086</div>
</div>
<div id="footer"><div class="ft" style="left:6px">06/03/26 16:27</div><div class="ft" style="right:10px">page 3 of 4</div></div>
</body></html>
